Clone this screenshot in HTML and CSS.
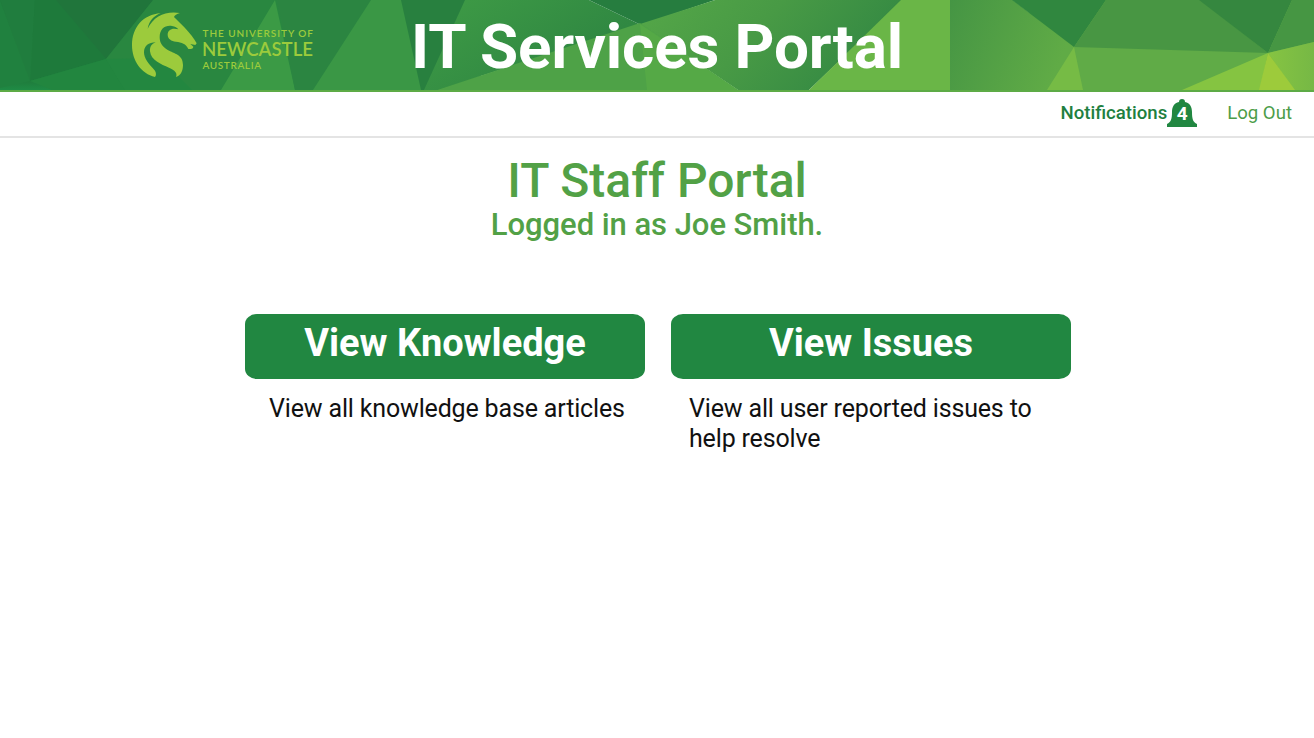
FILE: index.html
```html
<!DOCTYPE html>
<html lang="en">
<head>
<meta charset="utf-8">
<title>IT Services Portal</title>
<link rel="stylesheet" href="styles.css">
</head>
<body>
<header class="banner">
  <svg class="banner-art" viewBox="0 0 1314 90" preserveAspectRatio="none" aria-hidden="true">
    <defs>
      <linearGradient id="a" x1="0" y1="0" x2="0" y2="1"><stop offset="0" stop-color="#1f7b3d"/><stop offset="1" stop-color="#218641"/></linearGradient>
      <linearGradient id="b" x1="0" y1="0" x2="0" y2="1"><stop offset="0" stop-color="#1f7c3c"/><stop offset="1" stop-color="#1f8b45"/></linearGradient>
      <linearGradient id="c" x1="0" y1="0" x2="1" y2=".4"><stop offset="0" stop-color="#3c9a45"/><stop offset="1" stop-color="#318942"/></linearGradient>
      <linearGradient id="d" x1="0" y1="0" x2="1" y2=".3"><stop offset="0" stop-color="#55a748"/><stop offset=".5" stop-color="#489a45"/><stop offset="1" stop-color="#348943"/></linearGradient>
      <linearGradient id="e" x1="0" y1="0" x2="1" y2=".3"><stop offset="0" stop-color="#459544"/><stop offset="1" stop-color="#60ab46"/></linearGradient>
      <linearGradient id="f" x1="0" y1="0" x2="1" y2="0"><stop offset="0" stop-color="#86c442"/><stop offset="1" stop-color="#76b845"/></linearGradient>
      <linearGradient id="g" gradientUnits="userSpaceOnUse" x1="330" y1="0" x2="380" y2="90"><stop offset="0" stop-color="#2b8541"/><stop offset="1" stop-color="#2b8541"/></linearGradient>
      <linearGradient id="h" gradientUnits="userSpaceOnUse" x1="470" y1="0" x2="530" y2="90"><stop offset="0" stop-color="#3c9845"/><stop offset="1" stop-color="#308842"/></linearGradient>
    </defs>
    <path fill="url(#a)" d="M0 0H330V90H0z"/>
    <path fill="#60ab47" d="M1030 0H1314V90H1030z"/>
    <path fill="#20813f" d="M0 0L30 81L0 90z"/>
    <path fill="#207d3e" d="M0 0H35L30 81z"/>
    <path fill="#1e7a3b" d="M35 0H56L106 59L30 81z"/>
    <path fill="#20753b" d="M56 0H153L106 59z"/>
    <path fill="#22863f" d="M106 59L30 81L52 90H125z"/>
    <path fill="url(#b)" d="M0 88L30 81L52 90H0z"/>
    <path fill="#298740" d="M153 0H480V90H125L106 59z"/>
    <path fill="#238740" d="M106 59L160 58L192 90H125z"/>
    <path fill="#3b9a45" d="M275 0L295 90H221z"/>
    <path fill="url(#g)" d="M277 0H371L313 90H295z"/>
    <path fill="#3a9745" d="M371 0H402L422 90H313z"/>
    <path fill="#28803f" d="M401 0H466L425 90H421z"/>
    <path fill="url(#h)" d="M465 0H589L641 25L437 90H424z"/>
    <path fill="#267d3f" d="M589 0H715L641 25z"/>
    <path fill="url(#d)" d="M715 0H903L809 90H738L640 24z"/>
    <path fill="#4ea247" d="M437 90L640 23L738 90z"/>
    <path fill="#55a946" d="M640 24L738 90H647z"/>
    <path fill="#6ab647" d="M901 0H951V90H809z"/>
    <path fill="url(#e)" d="M950 0H1013L1074 47L1047 90H950z"/>
    <path fill="#30873f" d="M1012 0H1106L1074 47z"/>
    <path fill="#489643" d="M1106 0H1200L1268 53L1074 47z"/>
    <path fill="#35873f" d="M1199 0H1292L1268 53z"/>
    <path fill="#469643" d="M1292 0H1314V42L1268 53z"/>
    <path fill="#76bb45" d="M1074 47L1083 90H1047z"/>
    <path fill="#85c441" d="M1268 53L1260 90H1182z"/>
    <path fill="url(#f)" d="M1268 53L1314 42V90H1294z"/>
    <path fill="#9dcb3b" d="M1268 53L1295 90H1259z"/>
  </svg>
  <svg class="logo" viewBox="0 0 190 75" role="img" aria-label="The University of Newcastle Australia">
    <g fill="#9ccb3c">
      <path transform="translate(-130 -8) scale(.33333)" d="M482 40C430 43 396 82 396 135C396 182 424 221 465 231C469 226 469 219 465 212C446 191 432 176 432 157C432 138 446 127 467 127C454 132 449 142 450 154C453 181 483 193 507 203C525 211 533 219 528 231C543 226 549 211 549 195C549 163 524 162 502 149C488 141 479 129 479 112C479 86 496 75 516 78C525 79 532 83 535 88C515 82 503 91 503 104C503 117 514 123 528 125C545 127 558 131 565 147C574 147 580 146 580 140L571 132L586 135L590 130C582 115 569 99 553 82L522 51C524 46 530 41 540 39C498 32 461 48 443 86C448 63 460 48 482 40z"/>
      <g class="logo-text">
        <text x="72.5" y="28.5" font-size="10" textLength="110.5">THE UNIVERSITY OF</text>
        <text x="72" y="48" font-size="19.5" textLength="111" lengthAdjust="spacingAndGlyphs">NEWCASTLE</text>
        <text x="72.5" y="60.5" font-size="10" textLength="58.5">AUSTRALIA</text>
      </g>
    </g>
  </svg>
  <h1 class="title">IT Services Portal</h1>
</header>
<nav class="toolbar">
  <a class="notifications">Notifications<span class="bell">
    <svg viewBox="0 0 30 28" aria-hidden="true"><path fill="#218741" d="M12 3C12 1 13 0 15 0S18 1 18 3C23 4 25 8 25 13C25 20 26 23 30 25V28H0V25C4 23 5 20 5 13C5 8 7 4 12 3z"/></svg>
    <span class="count">4</span></span></a>
  <a class="logout">Log Out</a>
</nav>
<main class="content">
  <h2 class="heading">IT Staff Portal</h2>
  <p class="user">Logged in as Joe Smith.</p>
  <div class="cards">
    <section class="card">
      <a class="button know">View Knowledge</a>
      <p class="desc desc-know">View all knowledge base articles</p>
    </section>
    <section class="card">
      <a class="button issues">View Issues</a>
      <p class="desc desc-issues">View all user reported issues to help resolve</p>
    </section>
  </div>
</main>
</body>
</html>
```
FILE: styles.css
```css
* { box-sizing: border-box; }
body { margin: 0; background: #fff; font-family: Roboto, "Liberation Sans", sans-serif; color: #111; }
h1, h2, p { margin: 0; }
.banner { position: relative; height: 92px; border-bottom: 2px solid #5dab46; display: flex; justify-content: center; }
.banner-art { position: absolute; left: 0; top: 0; width: 100%; height: 90px; }
.logo { position: absolute; left: 130px; top: 8px; width: 190px; height: 75px; }
.logo-text { font-family: Lato, sans-serif; font-weight: 600; }
.title { position: relative; color: #fff; font-size: 62px; letter-spacing: -0.15px; line-height: 94px; font-weight: 700; white-space: nowrap; }
.toolbar { height: 46px; border-bottom: 2px solid #e4e4e4; display: flex; justify-content: flex-end; gap: 30px; padding-right: 22px; font-size: 18.6px; line-height: 43px; color: #4c9d49; }
.notifications { display: flex; font-weight: 500; color: #217f40; }
.bell { position: relative; width: 30px; height: 28px; margin-top: 7px; }
.bell svg { display: block; width: 30px; height: 28px; }
.count { position: absolute; inset: 0; text-align: center; line-height: 30px; font-size: 19px; font-weight: 700; color: #fff; }
.content { text-align: center; padding-top: 15px; }
.heading { color: #52a146; font-size: 48px; line-height: 56px; font-weight: 500; }
.user { color: #52a146; font-size: 31px; letter-spacing: -0.05px; line-height: 32px; font-weight: 500; }
.cards { display: grid; grid-template-columns: 400px 400px; gap: 26px; justify-content: center; padding: 73px 0 0 2px; }
.button { display: block; height: 65px; border-radius: 12px / 10px; background: #218741; color: #fff; font-size: 38px; line-height: 59px; font-weight: 700; }
.desc { font-size: 25px; letter-spacing: -0.16px; line-height: 30px; margin-top: 15px; text-align: left; }
.desc-know { padding-left: 24px; white-space: nowrap; }
.desc-issues { padding: 0 30px 0 18px; }
```
